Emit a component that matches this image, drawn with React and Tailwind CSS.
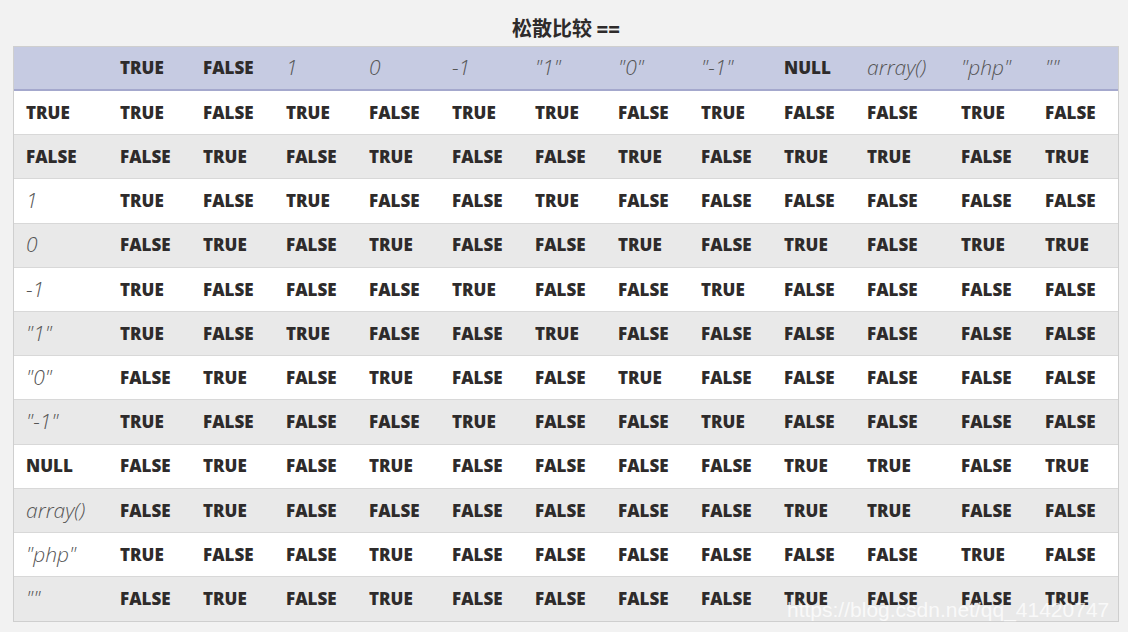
const headers = [
    { label: 'TRUE', bold: true },
    { label: 'FALSE', bold: true },
    { label: '1' },
    { label: '0' },
    { label: '-1' },
    { label: '"1"' },
    { label: '"0"' },
    { label: '"-1"' },
    { label: 'NULL', bold: true },
    { label: 'array()' },
    { label: '"php"' },
    { label: '""' },
];

const T = 'TRUE';
const F = 'FALSE';

const matrix = [
    [T, F, T, F, T, T, F, T, F, F, T, F],
    [F, T, F, T, F, F, T, F, T, T, F, T],
    [T, F, T, F, F, T, F, F, F, F, F, F],
    [F, T, F, T, F, F, T, F, T, F, T, T],
    [T, F, F, F, T, F, F, T, F, F, F, F],
    [T, F, T, F, F, T, F, F, F, F, F, F],
    [F, T, F, T, F, F, T, F, F, F, F, F],
    [T, F, F, F, T, F, F, T, F, F, F, F],
    [F, T, F, T, F, F, F, F, T, T, F, T],
    [F, T, F, F, F, F, F, F, T, T, F, F],
    [T, F, F, T, F, F, F, F, F, F, T, F],
    [F, T, F, T, F, F, F, F, T, F, F, T],
];

const cols = 'grid grid-cols-[94px_83px_83px_83px_83px_83px_83px_83px_83px_83px_94px_84px_84px]';

function Cell({ item }) {
    if (item.bold) {
        return <div className="pl-[12px] text-[17px] font-extrabold text-[#2e2b2b]">{item.label}</div>;
    }
    return <div className="pl-[12px] text-[21px] font-light italic text-[#555]">{item.label}</div>;
}

function App() {
    return (
        <div className="w-[1128px] h-[640px] bg-white font-['Open_Sans','Noto_Sans_CJK_SC',sans-serif]">
            <div className="relative bg-[#f2f2f2] h-[632px] pl-[13px] pr-[9px] pt-[12px]">
                <h1 className="h-[34px] text-center text-[20px] font-bold text-[#2e2b2b] leading-[32px] font-['Noto_Sans_CJK_SC',sans-serif]">
                    松散比较 <span className="font-['Open_Sans',sans-serif] font-extrabold">==</span>
                </h1>

                <div className="border border-[#cfcfcf] w-[1106px]">
                    <div className={`${cols} items-center h-[44px] bg-[#c6cbe2] border-b-2 border-[#a4a8cd]`}>
                        <div />
                        {headers.map((h, i) => (
                            <Cell key={i} item={h} />
                        ))}
                    </div>

                    {matrix.map((row, r) => (
                        <div
                            key={r}
                            className={`${cols} items-center h-[44.2px] ${r < matrix.length - 1 ? 'border-b border-[#d8d8d8]' : ''} ${r % 2 === 0 ? 'bg-white' : 'bg-[#e9e9e9]'}`}
                        >
                            <Cell item={headers[r]} />
                            {row.map((v, c) => (
                                <div key={c} className="pl-[12px] text-[17px] font-extrabold text-[#2e2b2b]">
                                    {v}
                                </div>
                            ))}
                        </div>
                    ))}
                </div>

                <div className="absolute left-[787px] top-[594px] text-[21px] text-white/75 font-['Liberation_Sans',sans-serif] pointer-events-none">
                    https://blog.csdn.net/qq_41420747
                </div>
            </div>
        </div>
    );
}

export default App;
